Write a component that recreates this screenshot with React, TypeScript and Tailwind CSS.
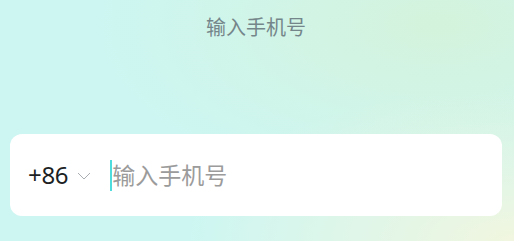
import React from 'react';

const font = { fontFamily: '"Noto Sans", "Noto Sans CJK SC", sans-serif' };

export default function App() {
  return (
    <div
      className="relative w-[514px] h-[241px] overflow-hidden bg-[#cdf6f2]"
      style={font}
    >
      {/* soft background glow */}
      <div className="absolute inset-0 bg-[radial-gradient(ellipse_at_85%_10%,#d4f3dc_0%,rgba(212,243,220,0)_55%)]" />
      <div className="absolute inset-0 bg-[radial-gradient(ellipse_at_100%_100%,#f1f6df_0%,rgba(241,246,223,0)_45%)]" />

      <div className="relative flex flex-col pl-[10px] pr-[12px]">
        <div className="h-[56px] flex items-center justify-center text-[20px] text-[#75868a]">
          输入手机号
        </div>
        <div className="mt-[78px] h-[82px] rounded-[12px] bg-white flex items-center pl-[18px]">
          <span className="text-[24px] text-[#1c1f24] tracking-[-0.3px]">+86</span>
          <svg className="ml-[9px] mt-[2px] w-[14px] h-[8px]" viewBox="0 0 14 8" fill="none">
            <path d="M1 1l6 6 6-6" stroke="#a0a4a8" strokeWidth="0.9" />
          </svg>
          <div className="ml-[19px] w-[2px] h-[31px] bg-[#4fdcdc]" />
          <span className="text-[23px] text-[#9b9b9b]">输入手机号</span>
        </div>
      </div>
    </div>
  );
}
